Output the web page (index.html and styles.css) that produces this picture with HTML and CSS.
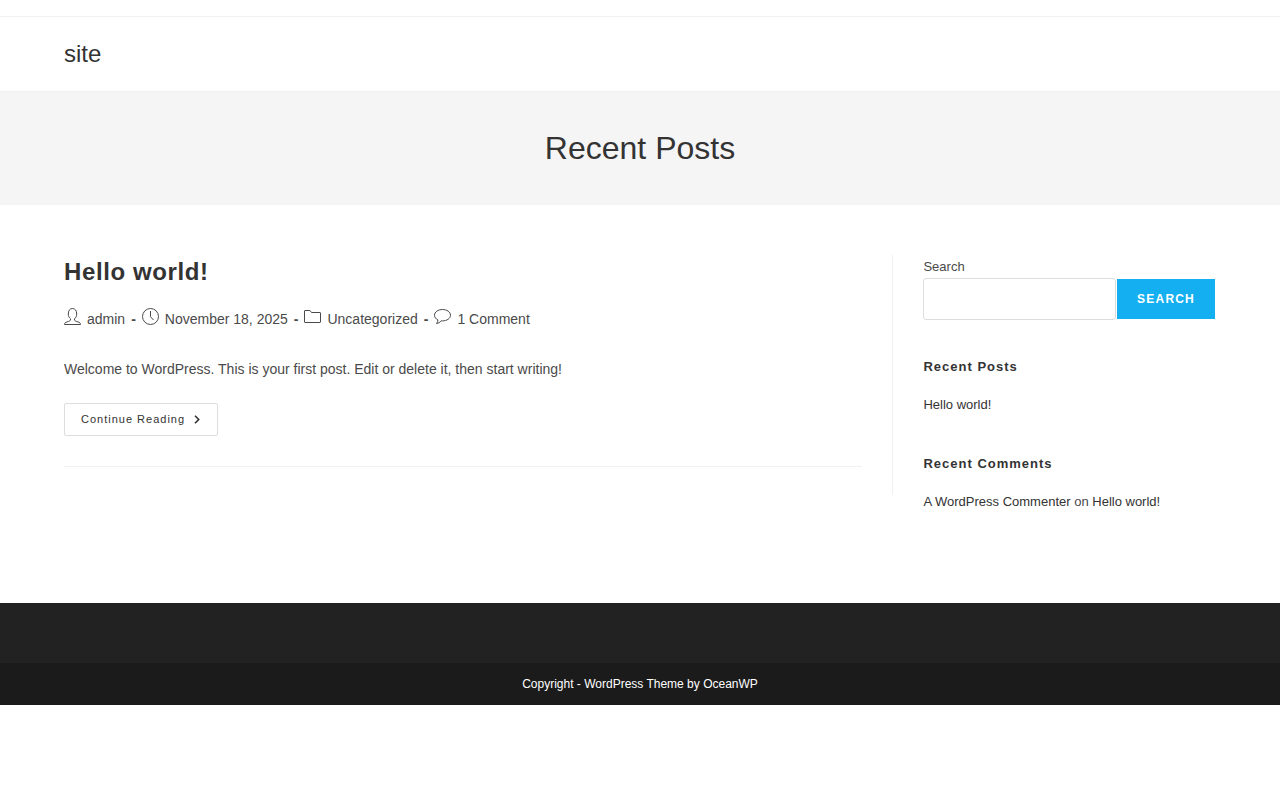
FILE: index.html
```
<!DOCTYPE html>
<html lang="en">
<head>
<meta charset="UTF-8">
<meta name="viewport" content="width=device-width, initial-scale=1.0">
<title>site</title>
<link rel="stylesheet" href="styles.css">
</head>
<body>
    <div class="top-bar"></div>

    <header class="site-header">
        <div class="container">
            <a href="#" class="site-logo">site</a>
        </div>
    </header>

    <div class="page-header">
        <h1 class="page-title">Recent Posts</h1>
    </div>

    <div class="container content-wrap">
        <main class="content">
            <article class="post">
                <h2 class="post-title"><a href="#">Hello world!</a></h2>
                <ul class="post-meta">
                    <li>
                        <svg class="icon" viewBox="0 0 17 17"><path d="M6.500 10.800v1.200c-.3 1-1.500 1.300-3.500 1.900-1.700.5-2.500 1.200-2.500 2.600h16c0-1.400-.8-2.100-2.500-2.600-2-.6-3.200-.9-3.500-1.900v-1.200c1.400-1.100 2.200-2.700 2.200-4.800C12.700 2.700 11.200.5 8.500.5S4.300 2.700 4.300 6c0 2.100.8 3.700 2.200 4.800z"/></svg>
                        <a href="#">admin</a>
                    </li>
                    <li>
                        <svg class="icon" viewBox="0 0 17 17"><circle cx="8.500" cy="8.500" r="8"/><path d="M8.500 3v5.700l3 3.300"/></svg>
                        November 18, 2025
                    </li>
                    <li>
                        <svg class="icon" viewBox="0 0 17 17"><path d="M.5 14V3c0-.3.200-.5.500-.5h5L7.500 4.500H16c.3 0 .5.200.5.500v9c0 .3-.2.500-.5.500H1c-.3 0-.5-.2-.5-.5z"/></svg>
                        <a href="#">Uncategorized</a>
                    </li>
                    <li>
                        <svg class="icon" viewBox="0 0 17 17"><path d="M8.500 1.500c-4.400 0-8 2.500-8 5.700 0 2 1.300 3.700 3.400 4.700 0 1.500-.5 2.600-1.400 3.600 1.900-.2 3.500-1.100 4.600-2.700.5.100.9.100 1.400.1 4.400 0 8-2.500 8-5.700s-3.600-5.700-8-5.700z"/></svg>
                        <a href="#">1 Comment</a>
                    </li>
                </ul>
                <p class="post-summary">Welcome to WordPress. This is your first post. Edit or delete it, then start writing!</p>
                <a href="#" class="read-more">Continue Reading
                    <svg class="arrow" viewBox="0 0 8 9"><path d="M2 .8l3.700 3.700L2 8.200"/></svg>
                </a>
            </article>
        </main>

        <aside class="sidebar">
            <form class="widget search-form">
                <label for="search">Search</label>
                <div class="search-row">
                    <input type="search" id="search">
                    <button type="submit">SEARCH</button>
                </div>
            </form>
            <section class="widget">
                <h2 class="widget-title">Recent Posts</h2>
                <p><a href="#">Hello world!</a></p>
            </section>
            <section class="widget">
                <h2 class="widget-title">Recent Comments</h2>
                <p><a href="#">A WordPress Commenter</a> on <a href="#">Hello world!</a></p>
            </section>
        </aside>
    </div>

    <footer>
        <div class="footer-widgets"></div>
        <div class="footer-bottom">Copyright - WordPress Theme by OceanWP</div>
    </footer>
</body>
</html>
```
FILE: styles.css
```
* {
    box-sizing: border-box;
}

body {
    margin: 0;
    background-color: #fff;
    color: #4a4a4a;
    font-family: "Liberation Sans", Arial, sans-serif;
    font-size: 14px;
    line-height: 25px;
}

h1,
h2,
p,
ul {
    margin: 0;
    padding: 0;
}

a {
    color: #333;
    text-decoration: none;
}

a:hover {
    color: #13aff0;
}

.container {
    width: 90%;
    margin: 0 auto;
}

.top-bar {
    height: 17px;
    border-bottom: 1px solid #f1f1f1;
}

.site-header {
    border-bottom: 1px solid #f1f1f1;
}

.site-logo {
    display: inline-block;
    font-size: 24px;
    line-height: 74px;
    vertical-align: top;
}

.page-header {
    padding: 34px 0;
    background-color: #f5f5f5;
    text-align: center;
}

.page-title {
    color: #333;
    font-size: 32px;
    font-weight: 400;
    line-height: 45px;
}

.content-wrap {
    display: flex;
    align-items: flex-start;
    padding: 50px 0 49px;
}

.content {
    width: 72%;
    padding: 0 30px 28px 0;
    border-right: 1px solid #f1f1f1;
}

.post {
    padding-bottom: 30px;
    border-bottom: 1px solid #f1f1f1;
}

.post-title {
    font-size: 24px;
    line-height: 34px;
    letter-spacing: 0.6px;
}

.post-meta {
    display: flex;
    margin: 16px 0 24px;
    list-style: none;
}

.post-meta li {
    display: flex;
    align-items: center;
    line-height: 28px;
}

.post-meta li:not(:last-child)::after {
    content: "-";
    margin: 0 6px;
    font-weight: 700;
}

.post-meta a {
    color: #4a4a4a;
}

.icon {
    width: 17px;
    height: 17px;
    margin: 0 6px 5px 0;
    fill: none;
    stroke: #4a4a4a;
}

.post-summary {
    margin-bottom: 21px;
}

.read-more {
    display: inline-flex;
    align-items: center;
    gap: 8px;
    padding: 0 16px;
    border: 1px solid #ddd;
    border-radius: 2px;
    font-size: 11px;
    line-height: 31px;
    letter-spacing: 1px;
    vertical-align: top;
}

.arrow {
    width: 8px;
    height: 9px;
    fill: none;
    stroke: #333;
    stroke-width: 1.6;
}

.sidebar {
    width: 28%;
    padding: 0 1px 0 30px;
    font-size: 13px;
    line-height: 23px;
}

.widget {
    margin-bottom: 40px;
}

.widget p {
    line-height: 24px;
}

.search-form label {
    display: block;
}

.search-row {
    display: flex;
    align-items: center;
    gap: 1px;
}

.search-row input {
    flex: 1;
    min-width: 0;
    height: 42px;
    padding: 0 12px;
    border: 1px solid #ddd;
    border-radius: 3px;
    background: none;
    font: inherit;
}

.search-row button {
    height: 40px;
    padding: 0 20px;
    border: none;
    background-color: #13aff0;
    color: #fff;
    font-family: inherit;
    font-size: 12px;
    font-weight: 700;
    letter-spacing: 1.2px;
    cursor: pointer;
}

.widget-title {
    margin-bottom: 19px;
    color: #333;
    font-size: 13px;
    line-height: 14px;
    letter-spacing: 1px;
}

.footer-widgets {
    height: 60px;
    background-color: #222;
}

.footer-bottom {
    padding: 10px 0;
    background-color: #1b1b1b;
    color: #fff;
    font-size: 12px;
    line-height: 22px;
    text-align: center;
}
```
